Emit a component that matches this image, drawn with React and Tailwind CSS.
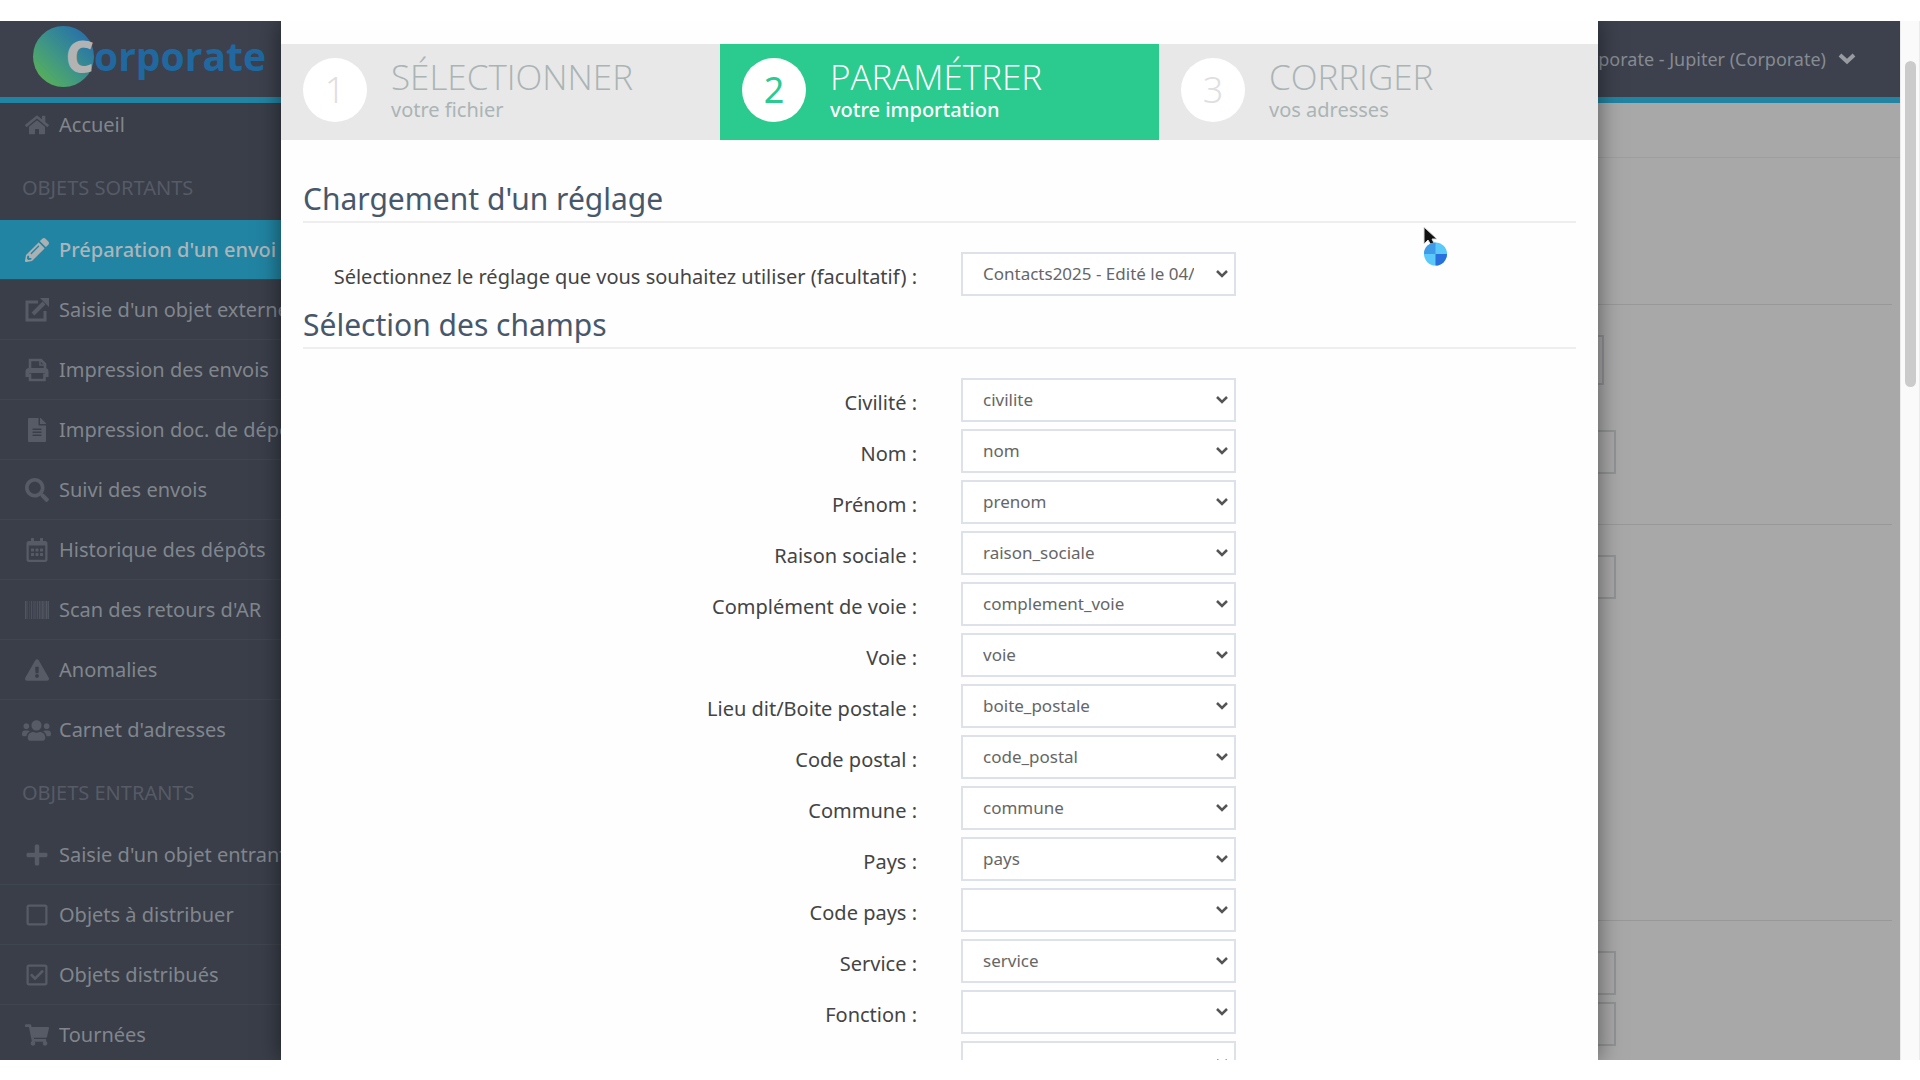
import React from 'react';
import {
    FaHome, FaFileAlt, FaSearch, FaRegCalendarAlt, FaBarcode,
    FaExclamationTriangle, FaUsers, FaPlus, FaRegSquare, FaRegCheckSquare,
    FaShoppingCart, FaPencilAlt,
} from 'react-icons/fa';

const ExternalLinkIcon = (props) => (
    <svg viewBox="0 0 24 24" fill="none" stroke="currentColor" strokeWidth="3" {...props}>
        <path d="M13 4H2v18h18v-9" />
        <path d="M8 16 19 5" strokeWidth="4" />
        <path d="M15 0h9v9z" fill="currentColor" stroke="none" />
    </svg>
);

const PrintIcon = (props) => (
    <svg viewBox="0 0 24 24" fill="none" stroke="currentColor" strokeWidth="2.6" {...props}>
        <path d="M5 12V2h11l4 4v6" />
        <path d="M15 2v5h5" strokeWidth="1.6" />
        <path d="M4 10h16a3.5 3.5 0 0 1 3.5 3.5V19H20v-4H4v4H.5v-5.500A3.500 3.500 0 0 1 4 10z" fill="currentColor" stroke="none" />
        <path d="M5 15.500v6.500h14.500v-6.500" />
    </svg>
);

const outgoing = [
    { label: "Préparation d'un envoi", icon: FaPencilAlt, active: true },
    { label: "Saisie d'un objet externe", icon: ExternalLinkIcon },
    { label: 'Impression des envois', icon: PrintIcon },
    { label: 'Impression doc. de dépôt', icon: FaFileAlt },
    { label: 'Suivi des envois', icon: FaSearch },
    { label: 'Historique des dépôts', icon: FaRegCalendarAlt },
    { label: "Scan des retours d'AR", icon: FaBarcode },
    { label: 'Anomalies', icon: FaExclamationTriangle },
    { label: "Carnet d'adresses", icon: FaUsers, wide: true, last: true },
];

const incoming = [
    { label: "Saisie d'un objet entrant", icon: FaPlus },
    { label: 'Objets à distribuer', icon: FaRegSquare },
    { label: 'Objets distribués', icon: FaRegCheckSquare },
    { label: 'Tournées', icon: FaShoppingCart },
];

const steps = [
    { number: 1, title: 'SÉLECTIONNER', subtitle: 'votre fichier' },
    { number: 2, title: 'PARAMÉTRER', subtitle: 'votre importation', active: true },
    { number: 3, title: 'CORRIGER', subtitle: 'vos adresses' },
];

const fields = [
    { id: 'civilite', label: 'Civilité :', value: 'civilite' },
    { id: 'nom', label: 'Nom :', value: 'nom' },
    { id: 'prenom', label: 'Prénom :', value: 'prenom' },
    { id: 'raison', label: 'Raison sociale :', value: 'raison_sociale' },
    { id: 'complement', label: 'Complément de voie :', value: 'complement_voie' },
    { id: 'voie', label: 'Voie :', value: 'voie' },
    { id: 'boite', label: 'Lieu dit/Boite postale :', value: 'boite_postale' },
    { id: 'cp', label: 'Code postal :', value: 'code_postal' },
    { id: 'commune', label: 'Commune :', value: 'commune' },
    { id: 'pays', label: 'Pays :', value: 'pays' },
    { id: 'codepays', label: 'Code pays :', value: '' },
    { id: 'service', label: 'Service :', value: 'service' },
    { id: 'fonction', label: 'Fonction :', value: '' },
    { id: 'extra', label: '', value: '' },
];

const NavItem = ({ label, icon: Icon, active, wide, last }) => (
    <li>
        <a
            href="#"
            className={`flex h-[60px] items-center whitespace-nowrap pl-[22px] text-[20px] ${last ? '' : 'border-b border-[#40464f]'} ${active ? 'bg-[#2184a2] font-medium text-[#adb5ba]' : 'text-[#81868d]'}`}
        >
            <span className={`mr-2 flex w-[29px] shrink-0 justify-center ${active ? 'text-[#adb0b2]' : 'text-[#565b66]'}`}>
                <Icon className={wide ? 'h-[29px] w-[29px]' : 'h-6 w-6'} />
            </span>
            {label}
        </a>
    </li>
);

const NavHeading = ({ children }) => (
    <h3 className="flex h-[65px] items-center pl-[22px] text-[20px] text-[#565b66]">{children}</h3>
);

const Logo = () => (
    <a href="#" className="flex h-full w-[281px] shrink-0 items-center pb-1.5 pl-[33px] font-['Open_Sans',sans-serif]">
        <span className="flex h-[61px] w-[61px] items-center justify-end rounded-full bg-linear-to-tr from-[#55ad5c] from-15% to-[#2a72a8] to-85% text-[44px] font-extrabold text-[#b3b3b3]">C</span>
        <span className="text-[39px] font-bold text-[#20689f]">orporate</span>
    </a>
);

const Field = ({ id, label, value }) => (
    <div className="flex items-center">
        <label htmlFor={id} className="w-[658px] shrink-0 pr-[22px] pt-1.5 text-right text-[20px] leading-7 text-[#444]">{label}</label>
        <div className="relative ml-[22px] w-[275px]">
            <select
                id={id}
                aria-label={label || 'Champ'}
                defaultValue={value}
                className="block h-[44px] w-full appearance-none overflow-hidden rounded-none border-2 border-[#dde1ea] bg-white pl-5 pr-10 text-[17px] text-[#666] outline-none"
            >
                <option value={value}>{value}</option>
            </select>
            <svg viewBox="0 0 12 8" className="pointer-events-none absolute right-2 top-[18px] h-2 w-3" fill="none" stroke="#555" strokeWidth="2.5">
                <path d="M1 1l5 5 5-5" />
            </svg>
        </div>
    </div>
);

const SectionTitle = ({ children }) => (
    <h2 className="border-b-2 border-[#eeeeee] pb-0.5 text-[30px] leading-[40px] text-[#47586b]">{children}</h2>
);

const Cursor = () => (
    <svg className="pointer-events-none absolute left-[1422px] top-[204px] h-[42px] w-[28px]" viewBox="0 0 28 42">
        <path d="M2 2v17l4-4 3 5 3-2-2-4h5z" fill="#111" stroke="#ddd" strokeWidth="1" />
        <circle cx="13.500" cy="29" r="11.500" fill="#5ac8f8" />
        <path d="M13.500 29V17.500a11.500 11.500 0 0 0-11.500 11.500z" fill="#3f9ae8" />
        <path d="M13.500 29v11.500a11.500 11.500 0 0 0 11.500-11.500z" fill="#2a70dc" />
    </svg>
);

const App = () => (
    <div className="flex h-screen bg-white pb-5 pt-[21px] font-['Noto_Sans','Open_Sans',sans-serif]">
        <div className="relative flex min-w-0 flex-1 flex-col overflow-hidden bg-[#a8a8a8]">
            <header className="relative z-10 flex h-[82px] shrink-0 items-center justify-between border-b-6 border-[#2184a2] bg-[#3c414d]">
                <Logo />
                <button className="flex items-center gap-3 pr-11 text-[18px] text-[#878b92]">
                    Corporate - Jupiter (Corporate)
                    <svg viewBox="0 0 18 12" className="h-3 w-[18px]" fill="none" stroke="#989ba0" strokeWidth="4">
                        <path d="M2 2l7 6.500L16 2" />
                    </svg>
                </button>
            </header>

            <div className="flex min-h-0 flex-1">
                <nav className="w-[281px] shrink-0 overflow-hidden bg-[#393e49]">
                    <ul className="-mt-2">
                        <NavItem label="Accueil" icon={FaHome} last />
                    </ul>
                    <NavHeading>OBJETS SORTANTS</NavHeading>
                    <ul>{outgoing.map((item) => <NavItem key={item.label} {...item} />)}</ul>
                    <NavHeading>OBJETS ENTRANTS</NavHeading>
                    <ul>{incoming.map((item) => <NavItem key={item.label} {...item} />)}</ul>
                </nav>

                <main className="min-w-0 flex-1 overflow-hidden">
                    <div className="h-[55px] border-b border-[#9d9da3]" />
                    <div className="mr-2 h-[147px] border-b border-[#989898]" />
                    <div className="mr-2 flex flex-col items-end border-b border-[#989898] pb-[50px] pr-[276px] pt-[30px]">
                        <div className="mr-3 h-[50px] w-80 border-2 border-[#8f9296]" />
                        <div className="mt-[45px] h-[44px] w-80 border-2 border-[#919494]" />
                    </div>
                    <div className="mr-2 flex flex-col items-end border-b border-[#989898] pb-[321px] pr-[276px] pt-[30px]">
                        <div className="h-[44px] w-80 border-2 border-[#919494]" />
                    </div>
                    <div className="mr-2 flex flex-col items-end gap-[7px] pr-[276px] pt-[30px]">
                        <div className="h-[44px] w-80 border-2 border-[#919494]" />
                        <div className="h-[44px] w-80 border-2 border-[#919494]" />
                    </div>
                </main>
            </div>

            <section
                role="dialog"
                aria-label="Importation"
                className="absolute inset-y-0 left-[281px] right-[302px] z-20 overflow-hidden bg-[#fefefe] pt-[23px]"
            >
                <ol className="grid grid-cols-3">
                    {steps.map((step) => (
                        <li
                            key={step.number}
                            className={`flex h-24 items-start gap-6 pl-[22px] pt-[14px] ${step.active ? 'bg-[#2bca8e] text-white' : 'bg-[#e8e8e8] text-[#aab4b5]'}`}
                        >
                            <span className={`flex h-16 w-16 items-center justify-center rounded-full bg-white text-[36px] ${step.active ? 'text-[#2bca8e]' : 'font-light text-[#dfdfdf]'}`}>
                                {step.number}
                            </span>
                            <div>
                                <div className="font-['Open_Sans',sans-serif] text-[35px] font-light leading-[38px]">{step.title}</div>
                                <div className={`text-[20px] leading-7 ${step.active ? 'font-medium' : ''}`}>{step.subtitle}</div>
                            </div>
                        </li>
                    ))}
                </ol>

                <div className="px-[22px] pt-[39px]">
                    <SectionTitle>Chargement d'un réglage</SectionTitle>
                    <div className="-ml-[22px] pb-[9px] pt-[29px]">
                        <Field
                            id="reglage"
                            label="Sélectionnez le réglage que vous souhaitez utiliser (facultatif) :"
                            value="Contacts2025 - Edité le 04/02/2025"
                        />
                    </div>
                    <SectionTitle>Sélection des champs</SectionTitle>
                    <div className="-ml-[22px] flex flex-col gap-[7px] pt-[29px]">
                        {fields.map((field) => <Field key={field.id} {...field} />)}
                    </div>
                </div>
            </section>

            {/* shadow drawn on both sides of the dialog */}
            <div className="pointer-events-none absolute inset-y-0 left-[281px] right-[302px] z-10 shadow-[0_0_22px_rgba(0,0,0,0.5)]" />
            <div className="pointer-events-none absolute inset-0 z-30"><Cursor /></div>
        </div>

        <div className="w-5 shrink-0 border-x border-[#ebebeb] bg-[#fafafa] pt-10">
            <div className="mx-auto h-[326px] w-[11px] rounded-full bg-[#cbcbcb]" />
        </div>
    </div>
);

export default App;
